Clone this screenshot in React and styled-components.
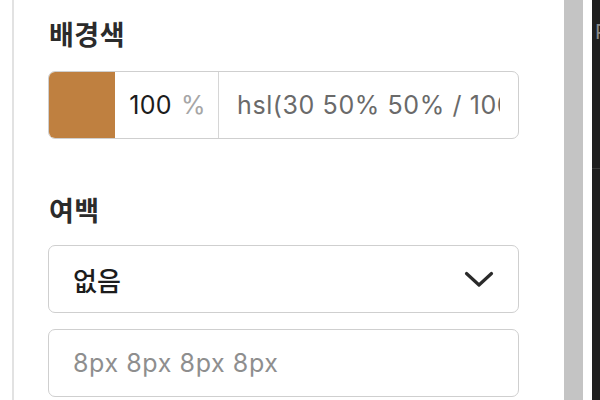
import React from "react";
import styled, { createGlobalStyle } from "styled-components";

const GlobalStyle = createGlobalStyle`
  html, body {
    margin: 0;
    padding: 0;
    background: #ffffff;
    overflow: hidden;
  }
  body {
    font-family: "Inter", "Noto Sans CJK KR", sans-serif;
  }
`;

const Screen = styled.div`
  display: flex;
  width: 600px;
  height: 400px;
  overflow: hidden;
  background: #ffffff;
`;

const Panel = styled.div`
  width: 564px;
  flex-shrink: 0;
  padding-left: 12px;
  box-sizing: border-box;
`;

const PanelBody = styled.div`
  height: 100%;
  border-left: 2px solid #e2e2e2;
  padding: 17px 45px 0 34px;
  box-sizing: border-box;
`;

const Section = styled.section`
  display: flex;
  flex-direction: column;
  gap: ${(p) => p.gap || 16}px;
  margin-bottom: ${(p) => p.spacing || 0}px;
`;

const Label = styled.h3`
  margin: 0 0 2px;
  padding-left: 1px;
  font-family: "Noto Sans CJK KR", sans-serif;
  font-size: 27px;
  font-weight: 700;
  line-height: 34px;
  letter-spacing: 0.5px;
  color: #2b2b2b;
`;

const ColorRow = styled.div`
  display: flex;
  height: 68px;
  border: 1.5px solid #cfcfcf;
  border-radius: 7px;
  overflow: hidden;
  box-sizing: border-box;
`;

const Swatch = styled.div`
  width: 66px;
  flex-shrink: 0;
  background: ${(p) => p.color};
`;

const Alpha = styled.div`
  width: 104px;
  flex-shrink: 0;
  display: flex;
  align-items: center;
  justify-content: flex-end;
  gap: 9px;
  padding-right: 12px;
  box-sizing: border-box;
  border-right: 1.5px solid #d6d6d6;
  font-size: 25px;
  letter-spacing: 0.4px;
`;

const AlphaValue = styled.span`
  color: #1c1c1c;
`;

const Unit = styled.span`
  color: #a6a6a6;
`;

const TextInput = styled.input`
  flex: 1;
  min-width: 0;
  border: none;
  outline: none;
  padding: 0 18px;
  font-family: "Inter", "Noto Sans CJK KR", sans-serif;
  font-size: 25px;
  letter-spacing: 0.6px;
  color: #6a6a6a;
  background: transparent;
`;

const Select = styled.div`
  display: flex;
  align-items: center;
  justify-content: space-between;
  height: 68px;
  padding: 0 24px;
  border: 1.5px solid #cfcfcf;
  border-radius: 7px;
  box-sizing: border-box;
  font-family: "Noto Sans CJK KR", sans-serif;
  font-size: 26px;
  font-weight: 500;
  color: #1c1c1c;
`;

const Field = styled.input`
  display: block;
  width: 100%;
  height: 68px;
  padding: 0 24px;
  border: 1.5px solid #cfcfcf;
  border-radius: 7px;
  box-sizing: border-box;
  outline: none;
  font-family: "Inter", "Noto Sans CJK KR", sans-serif;
  font-size: 25px;
  letter-spacing: 0.6px;
  color: #333;

  &::placeholder {
    color: #8e8e8e;
  }
`;

const Scrollbar = styled.div`
  width: 19px;
  flex-shrink: 0;
  background: #c4c4c4;
`;

const Gutter = styled.div`
  width: 9px;
  flex-shrink: 0;
  background: #ffffff;
`;

const DarkPane = styled.div`
  flex: 1;
  background: #1f1f1f;
  overflow: hidden;
`;

const DarkHeader = styled.div`
  height: 169px;
  padding: 20px 0 0 3px;
  box-sizing: border-box;
  border-bottom: 1px solid #3a3a3a;
  font-family: "Inter", sans-serif;
  font-size: 20px;
  color: #8a8a8a;
  white-space: nowrap;
`;

const Chevron = () => (
  <svg width="30" height="17" viewBox="0 0 30 17" fill="none">
    <polyline
      points="2.5,2.5 15,14 27.5,2.5"
      stroke="#2a2a2a"
      strokeWidth="3.2"
      strokeLinecap="round"
      strokeLinejoin="round"
    />
  </svg>
);

export default function App() {
  return (
    <>
      <GlobalStyle />
      <Screen>
        <Panel>
          <PanelBody>
            <Section gap={18} spacing={54}>
              <Label>배경색</Label>
              <ColorRow>
                <Swatch color="hsl(30 50% 50%)" />
                <Alpha>
                  <AlphaValue>100</AlphaValue>
                  <Unit>%</Unit>
                </Alpha>
                <TextInput readOnly value="hsl(30 50% 50% / 100%)" />
              </ColorRow>
            </Section>
            <Section gap={16}>
              <Label>여백</Label>
              <Select>
                <span>없음</span>
                <Chevron />
              </Select>
              <Field placeholder="8px 8px 8px 8px" />
            </Section>
          </PanelBody>
        </Panel>
        <Scrollbar />
        <Gutter />
        <DarkPane>
          <DarkHeader>Preview</DarkHeader>
        </DarkPane>
      </Screen>
    </>
  );
}
